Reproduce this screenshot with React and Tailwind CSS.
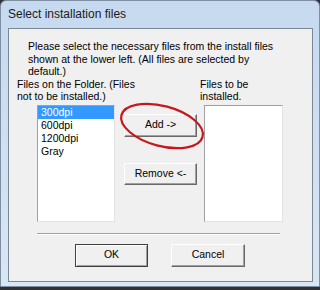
import React from 'react';

const btn = 'flex items-center justify-center bg-[#f0f0f0] border border-t-white border-l-white border-b-[#696969] border-r-[#696969] shadow-[inset_-1px_-1px_0_#a0a0a0]';

function ListBox({ items = [], className = '' }) {
  return (
    <div className={`h-[117px] bg-white border border-t-[#a0a0a0] border-l-[#a0a0a0] border-b-[#e3e3e3] border-r-[#e3e3e3] ${className}`}>
      {items.map((it, i) => (
        <div key={it} className={`h-[13px] leading-[13px] pl-[3px] ${i === 0 ? 'bg-[#3399ff] text-white' : 'text-black'}`}>{it}</div>
      ))}
    </div>
  );
}

export default function App() {
  return (
    <div className="w-[320px] h-[290px] bg-[#2e3238] font-['Liberation_Sans',Arial,sans-serif] text-[10.5px] text-black">
      <div className="relative w-[320px] h-[287px] flex flex-col rounded-t-[6px] border border-[#7f8fa3] bg-gradient-to-b from-[#c6d9ef] to-[#d9e6f4]">
        <div className="h-[27px] pl-[7px] pt-[6px] text-[12px] leading-[14px] text-[#1a1a1a]">Select installation files</div>

        {/* client area */}
        <div className="ml-[7px] mr-[6px] h-[254px] border border-[#7a8794] bg-[#f0f0f0] flex flex-col">
          <div className="pl-[19px] pt-[11px] leading-[12.5px]">
            Please select the necessary files from the install files<br />
            shown at the lower left. (All files are selected by<br />
            default.)
          </div>
          <div className="flex leading-[12.5px]">
            <div className="pl-[8px] w-[191px]">Files on the Folder. (Files<br />not to be installed.)</div>
            <div>Files to be<br />installed.</div>
          </div>

          <div className="flex mt-[2px] pl-[28px]">
            <ListBox className="w-[78px]" items={['300dpi', '600dpi', '1200dpi', 'Gray']} />
            <div className="ml-[9px] w-[73px] pt-[9px] flex flex-col">
              <button className={`${btn} h-[23px]`}>Add -&gt;</button>
              <button className={`${btn} h-[22px] mt-[26px]`}>Remove &lt;-</button>
            </div>
            <ListBox className="ml-[7px] w-[79px]" />
          </div>

          <div className="ml-[28px] w-[243px] mt-[11px] h-[2px] border-t border-t-[#a0a0a0] border-b border-b-white" />

          <div className="flex mt-[9px] pl-[66px]">
            <button className="flex items-center justify-center w-[73px] h-[23px] bg-[#f0f0f0] border border-[#404040] shadow-[inset_1px_1px_0_#fff,inset_-1px_-1px_0_#a0a0a0]">OK</button>
            <button className={`${btn} w-[74px] h-[23px] ml-[23px]`}>Cancel</button>
          </div>
        </div>

        {/* red annotation circle */}
        <svg className="absolute left-[112px] top-[96px]" width="100" height="60" viewBox="0 0 100 60">
          <ellipse cx="49" cy="29" rx="42" ry="20" transform="rotate(15 49 29)" fill="none" stroke="#c8161c" strokeWidth="2.2" />
        </svg>
      </div>
    </div>
  );
}
